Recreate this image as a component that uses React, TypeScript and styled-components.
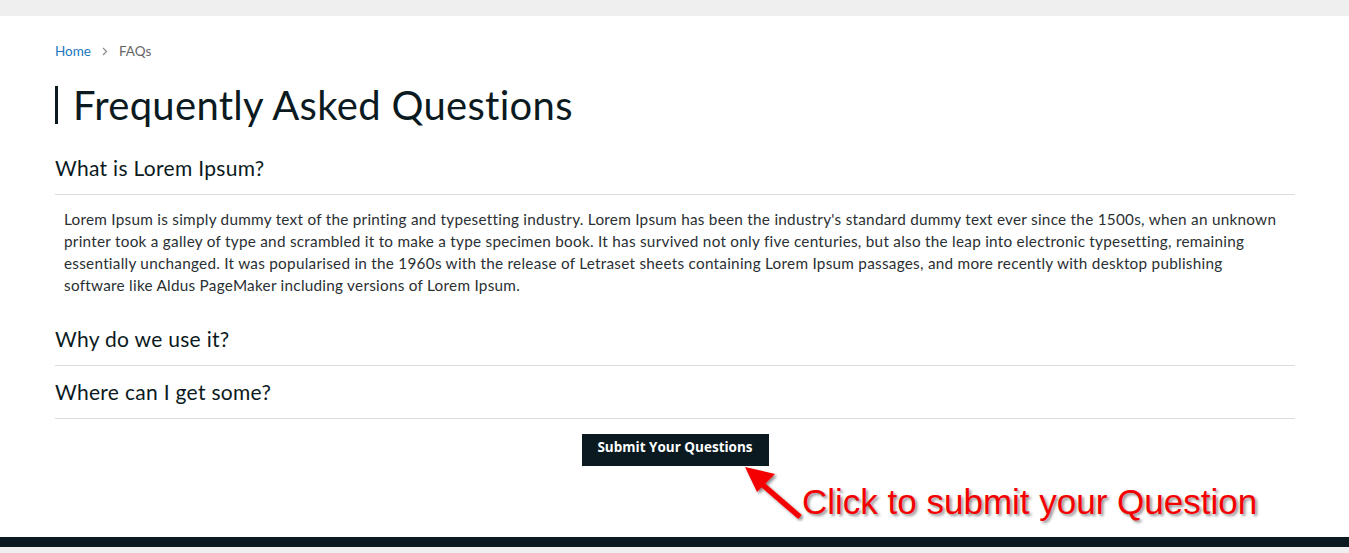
import React from "react";
import styled, { createGlobalStyle } from "styled-components";

const Global = createGlobalStyle`
  html, body { margin: 0; padding: 0; background: #fff; }
  body { font-family: Lato, "Noto Sans", sans-serif; color: #0b1a21; }
  * { box-sizing: border-box; }
`;

const Page = styled.div`
  position: relative;
  width: 1349px;
  height: 553px;
  display: flex;
  flex-direction: column;
  overflow: hidden;
`;

const TopBar = styled.div`
  height: 16px;
  background: #efefef;
  flex: none;
`;

const Main = styled.main`
  flex: 1;
  padding: 26px 54px 0 55px;
  display: flex;
  flex-direction: column;
`;

const Crumbs = styled.nav`
  display: flex;
  align-items: center;
  gap: 11px;
  font-size: 13.5px;
  line-height: 18px;
  height: 18px;
`;

const CrumbLink = styled.a`
  color: #1a78c2;
  text-decoration: none;
`;

const CrumbCurrent = styled.span`
  color: #666;
`;

const Chevron = () => (
  <svg width="6" height="9" viewBox="0 0 6 9">
    <path d="M1 1 L4.5 4.5 L1 8" fill="none" stroke="#8a8a8a" strokeWidth="1.2" />
  </svg>
);

const Title = styled.h1`
  margin: 26px 0 0 0;
  border-left: 3px solid #0b1a21;
  padding-left: 15px;
  font-weight: 400;
  font-size: 40px;
  line-height: 38px;
  height: 38px;
  color: #0b1a21;
  letter-spacing: 0.3px;
  white-space: nowrap;
`;

const Faq = styled.div`
  display: flex;
  flex-direction: column;
  margin-top: 18px;
`;

const Question = styled.h3`
  margin: 0;
  font-weight: 400;
  font-size: 21px;
  line-height: 28px;
  padding: 12px 0 12px 0;
  border-bottom: 1px solid #dcdcdc;
  color: #0b1a21;
  letter-spacing: 0.3px;
`;

const Answer = styled.p`
  margin: 0;
  padding: 13px 13px 17px 9px;
  font-size: 15.3px;
  line-height: 22px;
  color: #2a2f33;
  letter-spacing: 0.26px;
`;

const ButtonRow = styled.div`
  display: flex;
  justify-content: center;
  padding-top: 15px;
`;

const SubmitButton = styled.button`
  background: #0b1a21;
  color: #fff;
  border: none;
  font-family: "Open Sans", sans-serif;
  font-weight: 700;
  font-size: 13.5px;
  width: 187px;
  height: 32px;
  padding: 0 0 6px 0;
  cursor: pointer;
`;

const Footer = styled.footer`
  flex: none;
  height: 16px;
  border-top: 10px solid #0b1a21;
  background: #efefef;
`;

const Note = styled.div`
  position: absolute;
  left: 740px;
  top: 462px;
  display: flex;
  align-items: flex-end;
`;

const NoteText = styled.span`
  font-family: "Liberation Sans", Arial, sans-serif;
  font-size: 35px;
  color: #f50000;
  text-shadow: 2px 2px 3px rgba(0, 0, 0, 0.45);
  margin-left: -2px;
  margin-bottom: 1px;
  line-height: 38px;
`;

const Arrow = () => (
  <svg width="64" height="60" viewBox="0 0 64 60">
    <defs>
      <filter id="sh" x="-20%" y="-20%" width="150%" height="150%">
        <feDropShadow dx="2" dy="2" stdDeviation="1.5" floodColor="#000" floodOpacity="0.45" />
      </filter>
    </defs>
    <g filter="url(#sh)">
      <line x1="16" y1="17" x2="60" y2="55" stroke="#f50000" strokeWidth="5.5" />
      <polygon points="5,5 35,12 17,30" fill="#f50000" />
    </g>
  </svg>
);

export default function App() {
  return (
    <Page>
      <Global />
      <TopBar />
      <Main>
        <Crumbs>
          <CrumbLink href="#">Home</CrumbLink>
          <Chevron />
          <CrumbCurrent>FAQs</CrumbCurrent>
        </Crumbs>
        <Title>Frequently Asked Questions</Title>
        <Faq>
          <Question>What is Lorem Ipsum?</Question>
          <Answer>
            Lorem Ipsum is simply dummy text of the printing and typesetting industry. Lorem Ipsum has been the
            industry's standard dummy text ever since the 1500s, when an unknown printer took a galley of type and
            scrambled it to make a type specimen book. It has survived not only five centuries, but also the leap into
            electronic typesetting, remaining essentially unchanged. It was popularised in the 1960s with the release of
            Letraset sheets containing Lorem Ipsum passages, and more recently with desktop publishing software like
            Aldus PageMaker including versions of Lorem Ipsum.
          </Answer>
          <Question>Why do we use it?</Question>
          <Question>Where can I get some?</Question>
        </Faq>
        <ButtonRow>
          <SubmitButton>Submit Your Questions</SubmitButton>
        </ButtonRow>
      </Main>
      <Footer />
      <Note>
        <Arrow />
        <NoteText>Click to submit your Question</NoteText>
      </Note>
    </Page>
  );
}
